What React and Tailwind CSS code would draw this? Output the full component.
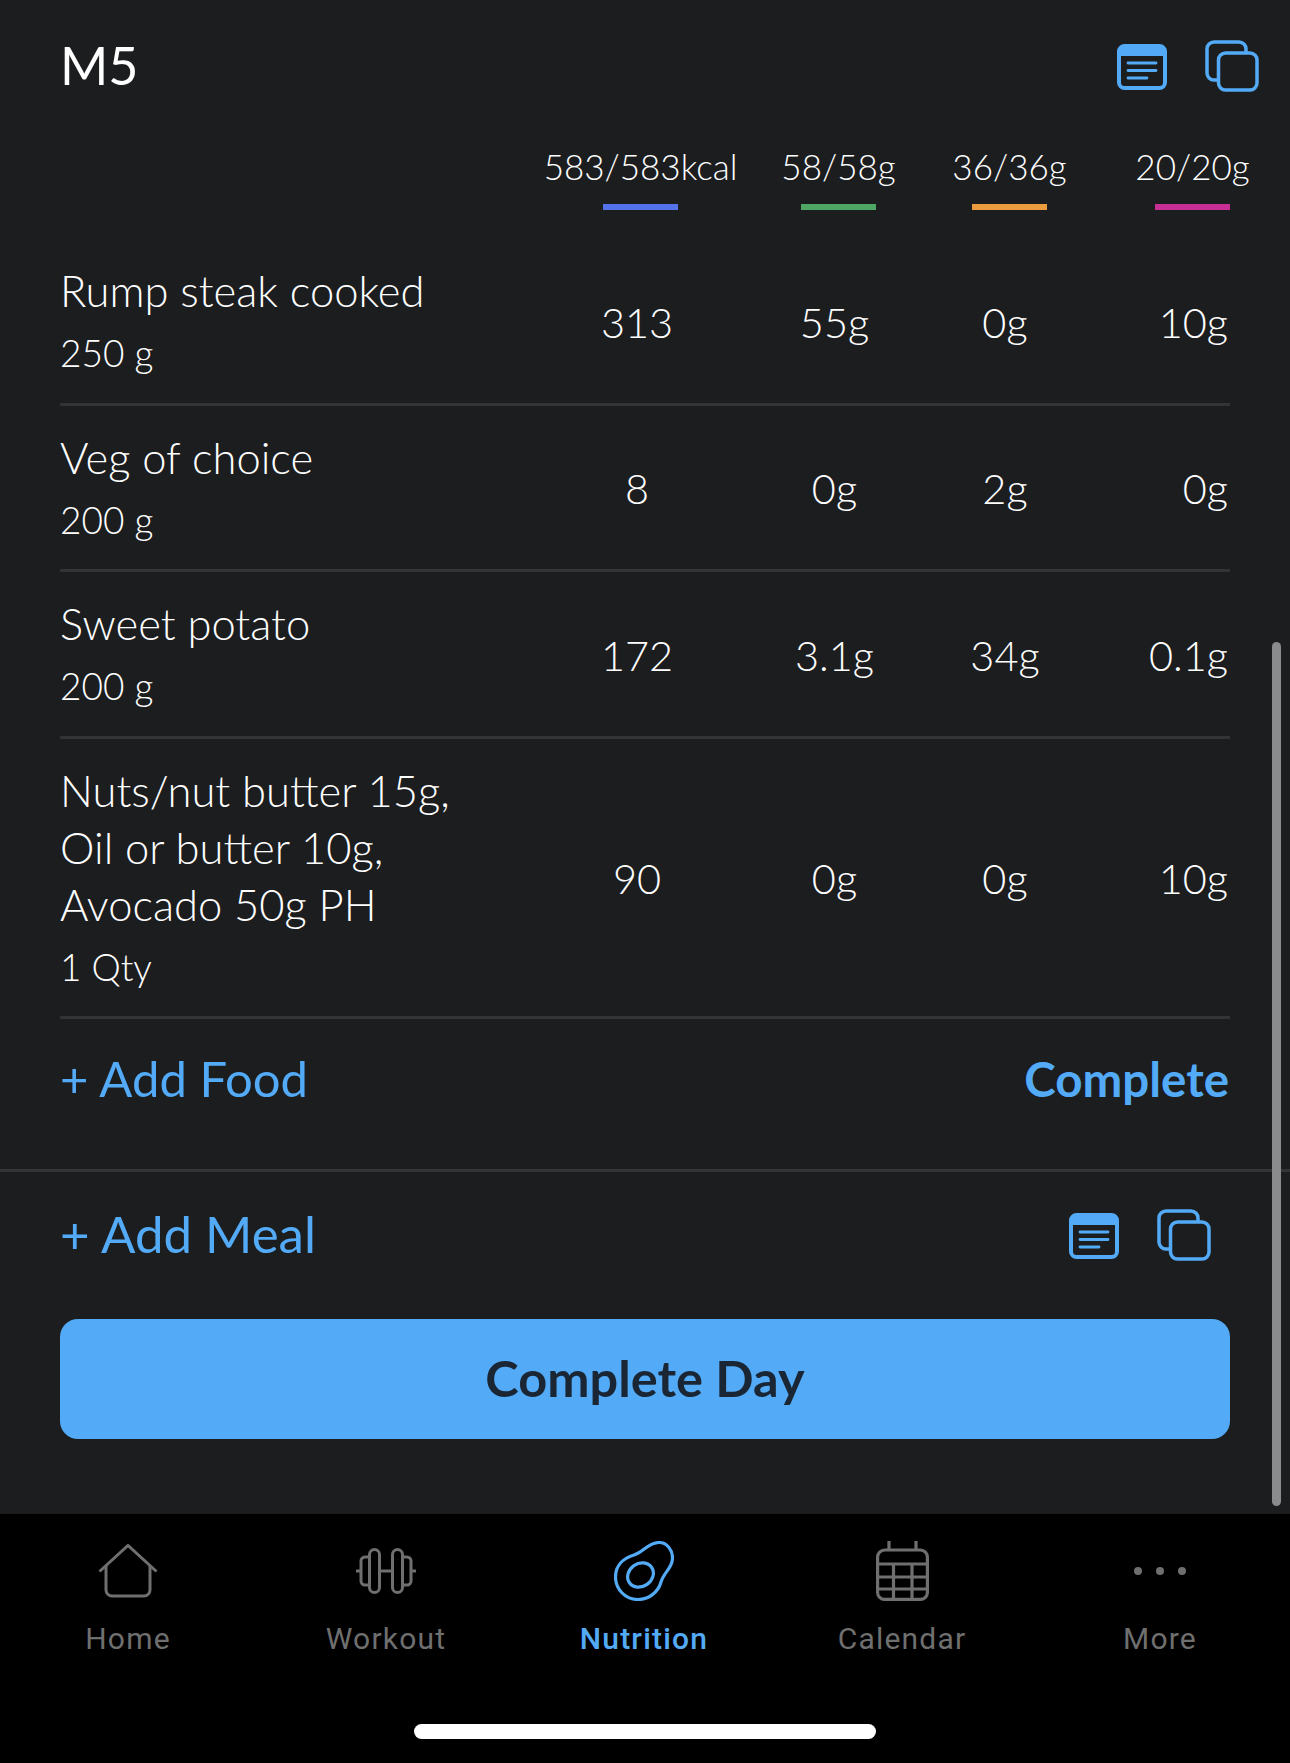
const SANS = "font-['Lato','Noto_Sans',sans-serif]";

const foods = [
  { lines: ['Rump steak cooked'], qty: '250 g', kcal: '313', p: '55g', c: '0g', f: '10g' },
  { lines: ['Veg of choice'], qty: '200 g', kcal: '8', p: '0g', c: '2g', f: '0g' },
  { lines: ['Sweet potato'], qty: '200 g', kcal: '172', p: '3.1g', c: '34g', f: '0.1g' },
  {
    lines: ['Nuts/nut butter 15g,', 'Oil or butter 10g,', 'Avocado 50g PH'],
    qty: '1 Qty',
    kcal: '90',
    p: '0g',
    c: '0g',
    f: '10g',
  },
];

const macros = [
  { text: '583/583kcal', bar: 'bg-[#5473ea]', gap: 'mr-[123px]' },
  { text: '58/58g', bar: 'bg-[#4ea765]', gap: 'mr-[96px]' },
  { text: '36/36g', bar: 'bg-[#ea9c3e]', gap: 'mr-[108px]' },
  { text: '20/20g', bar: 'bg-[#c82f94]', gap: '' },
];

function NotesIcon({ className }) {
  return (
    <svg viewBox="0 0 50 46" className={className} fill="none">
      <rect x="2" y="2" width="46" height="42" rx="5.5" stroke="#53abf7" strokeWidth="4" />
      <path d="M2 11V7.5A5.5 5.5 0 0 1 7.5 2h35A5.5 5.5 0 0 1 48 7.5V11Z" fill="#53abf7" stroke="#53abf7" strokeWidth="2" />
      <path d="M11 19h28M11 26.5h28M11 34h19" stroke="#53abf7" strokeWidth="2.8" strokeLinecap="round" />
    </svg>
  );
}

function CopyIcon({ className }) {
  return (
    <svg viewBox="0 0 54 52" className={className} fill="none" stroke="#53abf7" strokeWidth="3.5">
      <path d="M13 40H9a7 7 0 0 1-7-7V9a7 7 0 0 1 7-7h25a7 7 0 0 1 7 7v3" />
      <rect x="13.5" y="13" width="38.5" height="37" rx="7" />
    </svg>
  );
}

function HomeIcon() {
  return (
    <svg viewBox="0 0 60 54" className="w-[60px] h-[54px]" fill="none" stroke="#6f6f6f" strokeWidth="3">
      <path d="M1.5 27.5 30 1.5l28.5 26" />
      <path d="M8 22v24a6 6 0 0 0 6 6h32a6 6 0 0 0 6-6V22" />
    </svg>
  );
}

function DumbbellIcon() {
  return (
    <svg viewBox="0 0 60 46" className="w-[60px] h-[46px]" fill="none" stroke="#6f6f6f" strokeWidth="3">
      <rect x="13.5" y="1.5" width="10" height="43" rx="5" />
      <rect x="36.5" y="1.5" width="10" height="43" rx="5" />
      <path d="M13.5 9H9a4 4 0 0 0-4 4v20a4 4 0 0 0 4 4h4.5" />
      <path d="M46.5 9H51a4 4 0 0 1 4 4v20a4 4 0 0 1-4 4h-4.5" />
      <path d="M23.5 23h13M0 23h5M55 23h5" />
    </svg>
  );
}

function AvocadoIcon() {
  return (
    <svg viewBox="0 0 60 60" className="w-[60px] h-[60px]" fill="none" stroke="#53abf7" strokeWidth="3.2">
      <path d="M45 1.5c8 0 13.500 7.500 13.500 15.500 0 10-8.500 14-11.500 24-3 11-13 17.500-23 17.500C11 58.500 1.500 48 1.500 36c0-12 8.500-19 18.500-22C30 11 34 1.500 45 1.500Z" />
      <ellipse cx="26.500" cy="34" rx="13.500" ry="11.500" transform="rotate(-35 26.500 34)" />
    </svg>
  );
}

function CalendarIcon() {
  return (
    <svg viewBox="0 0 53 60" className="w-[53px] h-[60px]" fill="none" stroke="#6f6f6f" strokeWidth="3.2">
      <rect x="1.600" y="9" width="49.800" height="49.400" rx="7" />
      <path d="M13 0v9M40 0v9M1.600 23h49.800M1.600 36h49.800M1.600 48h49.800M17.500 23v35M36 23v35" />
    </svg>
  );
}

function TabItem({ label, active, children }) {
  return (
    <div className="flex flex-col items-center w-[258px] shrink-0">
      <div className="h-[70px] flex items-center justify-center">{children}</div>
      <span
        className={`mt-[15px] text-[30px] leading-[36px] tracking-[1.2px] font-['Roboto',sans-serif] ${
          active ? 'text-[#53abf7] font-medium' : 'text-[#6f6f6f]'
        }`}
      >
        {label}
      </span>
    </div>
  );
}

function FoodRow({ food }) {
  return (
    <div className="flex items-center border-b-[3px] border-[#333436] pt-[23px] pb-[20.5px]">
      <div className="flex-1">
        {food.lines.map((line) => (
          <div key={line} className="text-[43.5px] leading-[57px] text-white font-light">
            {line}
          </div>
        ))}
        <div className="mt-[5px] text-[37px] leading-[58px] text-white font-light">{food.qty}</div>
      </div>
      <div className="w-[100px] mr-[97.5px] text-center text-[41.5px] text-white font-light">{food.kcal}</div>
      <div className="w-[100px] mr-[70.5px] text-center text-[41.5px] text-white font-light">{food.p}</div>
      <div className="w-[100px] mr-[75px] text-center text-[41.5px] text-white font-light">{food.c}</div>
      <div className="w-[100px] pr-[2px] text-right text-[41.5px] text-white font-light">{food.f}</div>
    </div>
  );
}

export default function App() {
  return (
    <div className={`relative w-[1290px] h-[1763px] bg-black overflow-hidden ${SANS}`}>
      <div className="h-[1514px] bg-[#1c1d1f]">
        <div className="px-[60px]">
          <div className="flex items-center justify-between h-[130px]">
            <h1 className="text-[52px] text-white font-normal">M5</h1>
            <div className="flex items-center gap-[38px] -mr-[29px] pt-[2px]">
              <NotesIcon className="w-[50px] h-[46px] mt-[2px]" />
              <CopyIcon className="w-[54px] h-[52px]" />
            </div>
          </div>
          <div className="flex justify-end items-start pt-[14px] pb-[29px] text-white text-[35px] font-light">
            {macros.map((m) => (
              <div key={m.text} className={`flex flex-col items-center w-[75px] ${m.gap}`}>
                <span className="leading-[44px] whitespace-nowrap">{m.text}</span>
                <span className={`mt-[16px] w-[75px] h-[6px] ${m.bar}`} />
              </div>
            ))}
          </div>
          {foods.map((f) => (
            <FoodRow key={f.lines[0]} food={f} />
          ))}
          <div className="flex items-center justify-between h-[118.5px] text-[#53abf7] pr-[1px]">
            <span className="text-[49px]">+ Add Food</span>
            <span className="text-[47.5px] font-bold">Complete</span>
          </div>
        </div>
        <div className="border-t-[3px] border-[#333436] mt-[31px]" />
        <div className="px-[60px]">
          <div className="flex items-center justify-between h-[125px] text-[#53abf7] text-[51px]">
            <span>+ Add Meal</span>
            <div className="flex items-center gap-[38px] mr-[19px] pt-[2px]">
              <NotesIcon className="w-[50px] h-[46px] mt-[2px]" />
              <CopyIcon className="w-[54px] h-[52px]" />
            </div>
          </div>
          <button className="mt-[22px] w-full h-[120px] rounded-[18px] bg-[#53abf7] text-[#1b2635] text-[50.5px] font-bold pb-[2px]">
            Complete Day
          </button>
        </div>
      </div>

      {/* scrollbar */}
      <div className="absolute right-[9px] top-[642px] w-[9px] h-[864px] rounded-full bg-[#8a8b8c]" />

      <div className="flex -ml-[1px] pt-[22px]">
        <TabItem label="Home">
          <HomeIcon />
        </TabItem>
        <TabItem label="Workout">
          <DumbbellIcon />
        </TabItem>
        <TabItem label="Nutrition" active>
          <AvocadoIcon />
        </TabItem>
        <TabItem label="Calendar">
          <CalendarIcon />
        </TabItem>
        <TabItem label="More">
          <div className="flex gap-[14px]">
            <span className="w-[8px] h-[8px] rounded-full bg-[#6f6f6f]" />
            <span className="w-[8px] h-[8px] rounded-full bg-[#6f6f6f]" />
            <span className="w-[8px] h-[8px] rounded-full bg-[#6f6f6f]" />
          </div>
        </TabItem>
      </div>
      <div className="absolute left-[414px] top-[1724px] w-[462px] h-[15px] rounded-full bg-white" />
    </div>
  );
}
